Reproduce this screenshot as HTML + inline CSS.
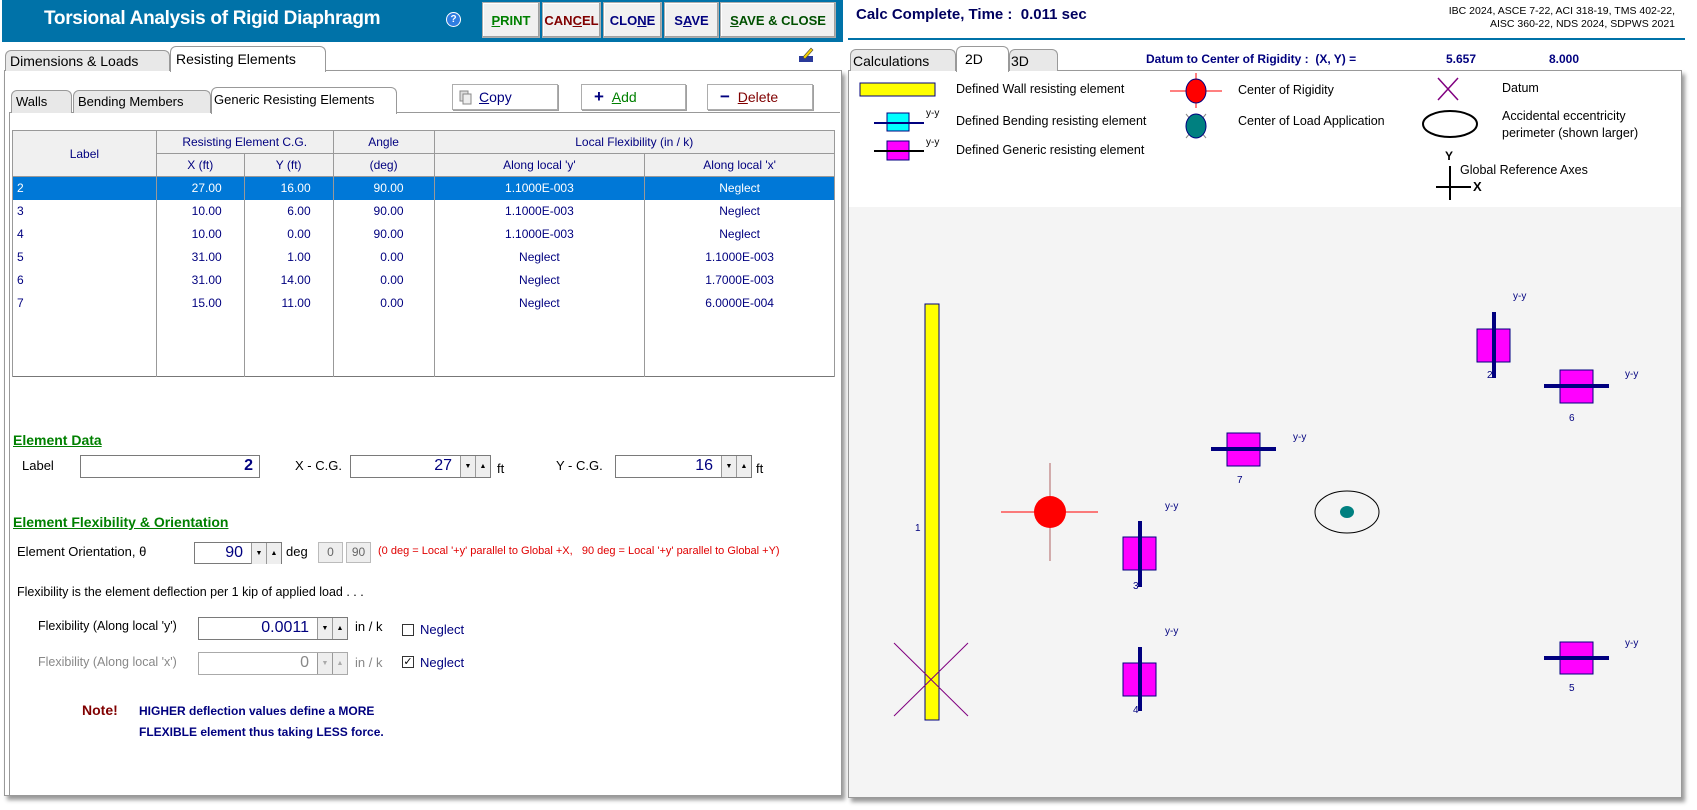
<!DOCTYPE html>
<html><head><meta charset="utf-8">
<style>
*{box-sizing:border-box;margin:0;padding:0}
body{width:1697px;height:810px;background:#fff;position:relative;overflow:hidden;font-family:"Liberation Sans",sans-serif;font-size:12px;color:#000}
.a{position:absolute}
.btn{position:absolute;background:#f0f0f0;border:1px solid #adadad;box-shadow:inset -1px -1px 0 #a0a0a0,inset 1px 1px 0 #fff;font-weight:bold;font-size:13px;text-align:center;line-height:36px}
.b2{position:absolute;background:#fff;border:1px solid #adadad;box-shadow:1px 1px 0 #a0a0a0;font-size:14px;line-height:24px}
.tab{position:absolute;background:#e8e8e8;border:1px solid #999;border-bottom:none;border-radius:6px 6px 0 0;font-size:14px;padding-left:4px}
.tabA{background:#fff;z-index:2}
table{border-collapse:collapse;position:absolute;font-size:12px;color:#00007f}
td{border-left:1px solid #999;border-right:1px solid #999;height:23px;padding:0 4px}
th{font-weight:normal;background:#f0f0f0;border:1px solid #999;height:23px}
.inp{position:absolute;background:#fff;border:1px solid #7a7a7a;font-size:16px;color:#00007f;text-align:right;line-height:20px}
.sp{position:absolute;top:0;width:15px;height:21px;background:#eee;border-left:1px solid #999;font-size:7px;text-align:center;line-height:21px;color:#000}
.h{position:absolute;color:#008000;font-weight:bold;text-decoration:underline;font-size:14px}
.t{position:absolute;white-space:nowrap}
.nv{color:#00007f}
</style></head><body>
<!-- title bar -->
<div class="a" style="left:2px;top:0;width:841px;height:42px;background:#0072a8"></div>
<div class="t" style="left:44px;top:8px;font-size:19px;font-weight:bold;color:#fff;letter-spacing:-0.3px">Torsional Analysis of Rigid Diaphragm</div>
<div class="a" style="left:446px;top:12px;width:15px;height:15px;border-radius:50%;background:#2f7de1;border:1px solid #fff;color:#fff;font-size:10px;font-weight:bold;text-align:center;line-height:13px">?</div>
<div class="btn" style="left:482px;top:2px;width:58px;height:36px;color:#008000"><u>P</u>RINT</div>
<div class="btn" style="left:542px;top:2px;width:59px;height:36px;color:#800000">CAN<u>C</u>EL</div>
<div class="btn" style="left:603px;top:2px;width:59px;height:36px;color:#00007f">CLO<u>N</u>E</div>
<div class="btn" style="left:664px;top:2px;width:55px;height:36px;color:#00007f">S<u>A</u>VE</div>
<div class="btn" style="left:720px;top:2px;width:116px;height:36px;color:#005000"><u>S</u>AVE &amp; CLOSE</div>

<!-- left panel -->
<div class="a" style="left:4px;top:70px;width:838px;height:726px;border:1px solid #999;border-top:1px solid #999;background:#fff;box-shadow:3px 4px 4px #999"></div>
<div class="tab" style="left:5px;top:50px;width:165px;height:21px;line-height:20px">Dimensions &amp; Loads</div>
<div class="tab tabA" style="left:170px;top:46px;width:156px;height:26px;line-height:24px;padding-left:5px">Resisting Elements</div>
<svg class="a" style="left:797px;top:46px" width="18" height="18"><rect x="2" y="10" width="14" height="6" fill="#2a3a9a"/><path d="M6 11 L14 2 L16 4 L8 13 Z" fill="#f5d000" stroke="#444" stroke-width="0.6"/></svg>

<div class="a" style="left:9px;top:112px;width:831px;height:684px;border-left:1px solid #999;border-top:1px solid #999"></div>
<div class="tab" style="left:11px;top:90px;width:61px;height:23px;line-height:22px;font-size:13px">Walls</div>
<div class="tab" style="left:73px;top:90px;width:138px;height:23px;line-height:22px;font-size:13px">Bending Members</div>
<div class="tab tabA" style="left:211px;top:87px;width:186px;height:27px;line-height:24px;font-size:13px;padding-left:2px">Generic Resisting Elements</div>
<div class="b2" style="left:452px;top:84px;width:106px;height:26px;padding-left:26px"><svg class="a" style="left:6px;top:5px" width="14" height="15"><rect x="1" y="1" width="8" height="10" fill="#ddd" stroke="#888"/><rect x="4" y="4" width="8" height="10" fill="#eee" stroke="#888"/></svg><span class="nv"><u>C</u>opy</span></div>
<div class="b2" style="left:581px;top:84px;width:105px;height:26px;padding-left:12px"><b style="color:#00007f;font-size:17px">+</b>&nbsp;&nbsp;<span style="color:#008000"><u>A</u>dd</span></div>
<div class="b2" style="left:707px;top:84px;width:106px;height:26px;padding-left:12px"><b style="color:#00007f;font-size:17px">&minus;</b>&nbsp;&nbsp;<span style="color:#800000"><u>D</u>elete</span></div>

<table style="left:12px;top:130px;width:823px;border:1px solid #777">
<colgroup><col style="width:144px"><col style="width:88px"><col style="width:89px"><col style="width:101px"><col style="width:211px"><col style="width:190px"></colgroup>
<tr><th rowspan="2">Label</th><th colspan="2">Resisting Element C.G.</th><th>Angle</th><th colspan="2">Local Flexibility (in / k)</th></tr>
<tr><th>X (ft)</th><th>Y (ft)</th><th>(deg)</th><th>Along local 'y'</th><th>Along local 'x'</th></tr>
<tr style="background:#0078d7;color:#fff"><td>2</td><td style="text-align:right;padding-right:22px">27.00</td><td style="text-align:right;padding-right:22px">16.00</td><td style="text-align:right;padding-right:30px">90.00</td><td style="text-align:center">1.1000E-003</td><td style="text-align:center">Neglect</td></tr>
<tr><td>3</td><td style="text-align:right;padding-right:22px">10.00</td><td style="text-align:right;padding-right:22px">6.00</td><td style="text-align:right;padding-right:30px">90.00</td><td style="text-align:center">1.1000E-003</td><td style="text-align:center">Neglect</td></tr>
<tr><td>4</td><td style="text-align:right;padding-right:22px">10.00</td><td style="text-align:right;padding-right:22px">0.00</td><td style="text-align:right;padding-right:30px">90.00</td><td style="text-align:center">1.1000E-003</td><td style="text-align:center">Neglect</td></tr>
<tr><td>5</td><td style="text-align:right;padding-right:22px">31.00</td><td style="text-align:right;padding-right:22px">1.00</td><td style="text-align:right;padding-right:30px">0.00</td><td style="text-align:center">Neglect</td><td style="text-align:center">1.1000E-003</td></tr>
<tr><td>6</td><td style="text-align:right;padding-right:22px">31.00</td><td style="text-align:right;padding-right:22px">14.00</td><td style="text-align:right;padding-right:30px">0.00</td><td style="text-align:center">Neglect</td><td style="text-align:center">1.7000E-003</td></tr>
<tr><td>7</td><td style="text-align:right;padding-right:22px">15.00</td><td style="text-align:right;padding-right:22px">11.00</td><td style="text-align:right;padding-right:30px">0.00</td><td style="text-align:center">Neglect</td><td style="text-align:center">6.0000E-004</td></tr>
<tr><td style="height:62px"></td><td></td><td></td><td></td><td></td><td></td></tr>
</table>

<div class="h" style="left:13px;top:432px">Element Data</div>
<div class="t" style="left:22px;top:458px;font-size:13px">Label</div>
<div class="inp" style="left:80px;top:455px;width:180px;height:23px;padding-right:6px;font-weight:bold">2</div>
<div class="t" style="left:295px;top:458px;font-size:13px">X - C.G.</div>
<div class="inp" style="left:350px;top:455px;width:141px;height:23px;padding-right:38px">27<div class="sp" style="right:15px">▼</div><div class="sp" style="right:0">▲</div></div>
<div class="t" style="left:497px;top:461px;font-size:13px">ft</div>
<div class="t" style="left:556px;top:458px;font-size:13px">Y - C.G.</div>
<div class="inp" style="left:615px;top:455px;width:137px;height:23px;padding-right:38px">16<div class="sp" style="right:15px">▼</div><div class="sp" style="right:0">▲</div></div>
<div class="t" style="left:756px;top:461px;font-size:13px">ft</div>

<div class="h" style="left:13px;top:514px">Element Flexibility &amp; Orientation</div>
<div class="t" style="left:17px;top:544px;font-size:13px">Element Orientation, θ</div>
<div class="inp" style="left:194px;top:542px;width:88px;height:22px;padding-right:38px">90<div class="sp" style="right:15px">▼</div><div class="sp" style="right:0">▲</div></div>
<div class="t" style="left:286px;top:544px;font-size:13px">deg</div>
<div class="a" style="left:318px;top:542px;width:25px;height:21px;background:#eee;border:1px solid #bbb;text-align:center;line-height:19px;color:#666">0</div>
<div class="a" style="left:346px;top:542px;width:25px;height:21px;background:#eee;border:1px solid #bbb;text-align:center;line-height:19px;color:#666">90</div>
<div class="t" style="left:378px;top:545px;font-size:11px;color:#e00000">(0 deg = Local '+y' parallel to Global +X,&nbsp;&nbsp; 90 deg = Local '+y' parallel to Global +Y)</div>
<div class="t" style="left:17px;top:585px;font-size:12.5px">Flexibility is the element deflection per 1 kip of applied load . . .</div>
<div class="t" style="left:38px;top:619px;font-size:12.5px">Flexibility (Along local 'y')</div>
<div class="inp" style="left:198px;top:617px;width:150px;height:23px;padding-right:38px">0.0011<div class="sp" style="right:15px">▼</div><div class="sp" style="right:0">▲</div></div>
<div class="t" style="left:355px;top:619px;font-size:13px">in / k</div>
<div class="a" style="left:402px;top:624px;width:12px;height:12px;border:1px solid #333;background:#fff"></div>
<div class="t nv" style="left:420px;top:622px;font-size:13px">Neglect</div>
<div class="t" style="left:38px;top:655px;font-size:12.5px;color:#888">Flexibility (Along local 'x')</div>
<div class="inp" style="left:198px;top:652px;width:150px;height:23px;padding-right:38px;color:#888;border-color:#aaa">0<div class="sp" style="right:15px;color:#aaa">▼</div><div class="sp" style="right:0;color:#aaa">▲</div></div>
<div class="t" style="left:355px;top:655px;font-size:13px;color:#888">in / k</div>
<div class="a" style="left:402px;top:656px;width:12px;height:12px;border:1px solid #333;background:#fff;font-size:11px;line-height:10px;text-align:center">✓</div>
<div class="t nv" style="left:420px;top:655px;font-size:13px">Neglect</div>
<div class="t" style="left:82px;top:702px;font-size:14px;font-weight:bold;color:#800000">Note!</div>
<div class="t" style="left:139px;top:701px;font-size:12px;font-weight:bold;color:#00007f;line-height:21px">HIGHER deflection values define a MORE<br>FLEXIBLE element thus taking LESS force.</div>

<!-- right panel -->
<div class="t" style="left:856px;top:6px;font-size:15px;font-weight:bold;color:#00005f">Calc Complete, Time :&nbsp; 0.011 sec</div>
<div class="t" style="right:22px;top:5px;font-size:10.5px;text-align:right;line-height:13px">IBC 2024, ASCE 7-22, ACI 318-19, TMS 402-22,<br>AISC 360-22, NDS 2024, SDPWS 2021</div>
<div class="a" style="left:848px;top:38px;width:837px;height:2px;background:#0072a8"></div>
<div class="a" style="left:848px;top:70px;width:834px;height:728px;border:1px solid #999;background:#f4f4f4;box-shadow:3px 4px 4px #999"></div>
<div class="a" style="left:849px;top:71px;width:832px;height:136px;background:#fff"></div>
<div class="tab" style="left:850px;top:49px;width:106px;height:22px;line-height:22px;font-size:14px;padding-left:2px">Calculations</div>
<div class="tab tabA" style="left:956px;top:46px;width:53px;height:26px;line-height:24px;padding-left:8px">2D</div>
<div class="tab" style="left:1009px;top:49px;width:49px;height:22px;line-height:22px;padding-left:1px">3D</div>
<div class="t" style="left:1146px;top:52px;font-size:12px;font-weight:bold;color:#00007f">Datum to Center of Rigidity :&nbsp; (X, Y) =</div>
<div class="t" style="left:1446px;top:52px;font-size:12px;font-weight:bold;color:#00007f">5.657</div>
<div class="t" style="left:1549px;top:52px;font-size:12px;font-weight:bold;color:#00007f">8.000</div>

<svg class="a" style="left:0;top:0" width="1697" height="810">
<g font-family="Liberation Sans, sans-serif" font-size="12.5">
<rect x="860" y="83" width="75" height="13" fill="#ffff00" stroke="#00007f"/>
<text x="956" y="93">Defined Wall resisting element</text>
<rect x="887" y="113" width="22" height="18" fill="#00ffff" stroke="#00007f"/>
<line x1="874" y1="123" x2="924" y2="123" stroke="#00007f" stroke-width="2"/>
<text x="926" y="116" font-size="10">y-y</text>
<text x="956" y="125">Defined Bending resisting element</text>
<rect x="887" y="141" width="22" height="19" fill="#ff00ff" stroke="#00007f"/>
<line x1="874" y1="151" x2="924" y2="151" stroke="#000" stroke-width="2"/>
<text x="926" y="145" font-size="10">y-y</text>
<text x="956" y="154">Defined Generic resisting element</text>
<line x1="1170" y1="91" x2="1222" y2="91" stroke="#f00"/>
<line x1="1196" y1="73" x2="1196" y2="108" stroke="#f00"/>
<ellipse cx="1196" cy="91" rx="10" ry="12" fill="#f00" stroke="#00007f"/>
<text x="1238" y="94">Center of Rigidity</text>
<line x1="1186" y1="114" x2="1206" y2="138" stroke="#888"/><line x1="1206" y1="114" x2="1186" y2="138" stroke="#888"/>
<ellipse cx="1196" cy="126" rx="10" ry="12" fill="#008080" stroke="#00007f"/>
<text x="1238" y="125">Center of Load Application</text>
<line x1="1438" y1="78" x2="1458" y2="100" stroke="#800080" stroke-width="1.5"/><line x1="1458" y1="78" x2="1438" y2="100" stroke="#800080" stroke-width="1.5"/>
<text x="1502" y="92">Datum</text>
<ellipse cx="1450" cy="124" rx="27" ry="13" fill="none" stroke="#000" stroke-width="2"/>
<text x="1502" y="120">Accidental eccentricity</text>
<text x="1502" y="137">perimeter (shown larger)</text>
<text x="1445" y="160" font-weight="bold" font-size="12">Y</text>
<line x1="1450" y1="166" x2="1450" y2="200" stroke="#000" stroke-width="2"/>
<line x1="1436" y1="187" x2="1471" y2="187" stroke="#000" stroke-width="2"/>
<text x="1473" y="191" font-weight="bold" font-size="13">X</text>
<text x="1460" y="174">Global Reference Axes</text>

<!-- drawing -->
<rect x="925" y="304" width="14" height="416" fill="#ffff00" stroke="#00007f"/>
<text x="915" y="531" font-size="10" fill="#00007f">1</text>
<line x1="894" y1="643" x2="968" y2="716" stroke="#800080"/><line x1="968" y1="643" x2="894" y2="716" stroke="#800080"/>
<line x1="1001" y1="512" x2="1098" y2="512" stroke="#f00"/>
<line x1="1050" y1="463" x2="1050" y2="561" stroke="#800000" stroke-width="0.6"/>
<circle cx="1050" cy="512" r="16" fill="#f00"/>
<ellipse cx="1347" cy="512" rx="32" ry="21" fill="none" stroke="#000"/>
<ellipse cx="1347" cy="512" rx="7" ry="6" fill="#008080"/>
<g fill="#ff00ff" stroke="#00007f">
<rect x="1123" y="537" width="33" height="33"/>
<rect x="1123" y="663" width="33" height="33"/>
<rect x="1227" y="433" width="33" height="33"/>
<rect x="1477" y="329" width="33" height="33"/>
<rect x="1560" y="370" width="33" height="33"/>
<rect x="1560" y="642" width="33" height="32"/>
</g>
<g fill="#00007f">
<rect x="1138" y="521" width="4" height="66"/>
<rect x="1138" y="647" width="4" height="64"/>
<rect x="1211" y="447" width="65" height="4"/>
<rect x="1492" y="312" width="4" height="66"/>
<rect x="1544" y="384" width="65" height="4"/>
<rect x="1544" y="656" width="65" height="4"/>
</g>
<g font-size="10" fill="#00007f">
<text x="1133" y="589">3</text><text x="1165" y="509">y-y</text>
<text x="1133" y="713">4</text><text x="1165" y="634">y-y</text>
<text x="1237" y="483">7</text><text x="1293" y="440">y-y</text>
<text x="1487" y="378">2</text><text x="1513" y="299">y-y</text>
<text x="1569" y="421">6</text><text x="1625" y="377">y-y</text>
<text x="1569" y="691">5</text><text x="1625" y="646">y-y</text>
</g>
</g>
</svg>
</body></html>
